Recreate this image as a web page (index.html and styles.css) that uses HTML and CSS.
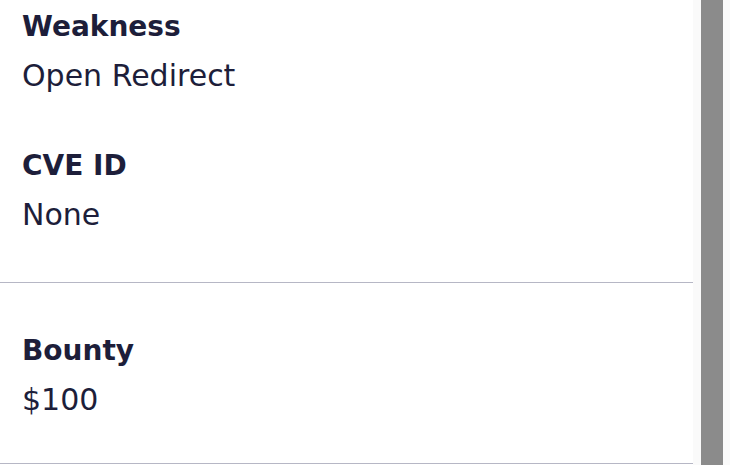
FILE: index.html
```html
<!DOCTYPE html>
<html lang="en">
<head>
<meta charset="utf-8">
<title>Report details</title>
<link rel="stylesheet" href="styles.css">
</head>
<body>
<div class="frame">
  <main class="panel">
    <section class="section section-first">
      <div class="field">
        <div class="label">Weakness</div>
        <div class="value">Open Redirect</div>
      </div>
      <div class="field">
        <div class="label">CVE ID</div>
        <div class="value">None</div>
      </div>
    </section>
    <section class="section section-second">
      <div class="field">
        <div class="label">Bounty</div>
        <div class="value">$100</div>
      </div>
    </section>
  </main>
  <div class="scrollbar"><div class="thumb"></div></div>
</div>
</body>
</html>
```
FILE: styles.css
```css
* { box-sizing: border-box; }
html, body {
  margin: 0;
  padding: 0;
  background: #ffffff;
  overflow: hidden;
}
.frame {
  display: flex;
  width: 730px;
  height: 465px;
  overflow: hidden;
}
.panel {
  width: 693px;
  flex: none;
  background: #ffffff;
  font-family: "DejaVu Sans", "Liberation Sans", sans-serif;
  color: #1d1e3a;
}
.section {
  padding-left: 22px;
  border-bottom: 1px solid #b6b7c5;
}
.section-first {
  padding-top: 3px;
  padding-bottom: 43px;
  display: flex;
  flex-direction: column;
  gap: 42px;
}
.section-second {
  padding-top: 44px;
  padding-bottom: 39px;
}
.label {
  font-weight: 700;
  font-size: 28px;
  line-height: 48px;
}
.value {
  font-weight: 400;
  font-size: 30px;
  line-height: 49px;
}
.scrollbar {
  flex: 1;
  background: #fafafa;
  padding-left: 8px;
  padding-right: 7px;
}
.thumb {
  width: 22px;
  height: 100%;
  background: #8b8b8b;
}
```
